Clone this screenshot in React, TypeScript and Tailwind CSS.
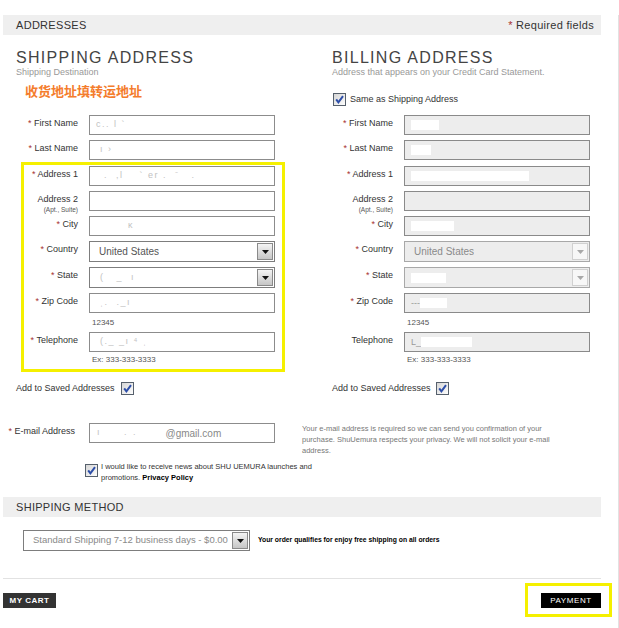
import React from "react";

const Check = () => (
  <svg width="13" height="13" viewBox="0 0 13 13" className="block shrink-0">
    <defs>
      <linearGradient id="cbg" x1="0" y1="0" x2="1" y2="1">
        <stop offset="0" stopColor="#d4d4d4" />
        <stop offset="1" stopColor="#ffffff" />
      </linearGradient>
    </defs>
    <rect x="0.5" y="0.5" width="12" height="12" fill="url(#cbg)" stroke="#56606c" />
    <path d="M3.2 6.4 L5.4 9.4 L10 3.2" fill="none" stroke="#2d4ea8" strokeWidth="2" />
  </svg>
);

type RowProps = {
  label: string;
  req?: boolean;
  labelW: string;
  h: string;
  mt?: string;
  sub?: string;
  children: React.ReactNode;
};

function Row({ label, req, labelW, h, mt = "", sub, children }: RowProps) {
  return (
    <div className={`flex items-start ${h} ${mt}`}>
      <div className={`${labelW} shrink-0 text-right text-[9px] leading-[12px] pt-[2px] text-[#333]`}>
        {req && <span className="text-[#a83232]">* </span>}
        {label}
        {sub && <div className="text-[6.5px] leading-[9px] text-[#555]">{sub}</div>}
      </div>
      <div className="ml-[11px]">{children}</div>
    </div>
  );
}

function Input({ gray, children }: { gray?: boolean; children?: React.ReactNode }) {
  return (
    <div
      className={`w-[186px] h-[20px] border flex items-center overflow-hidden ${
        gray ? "bg-[#ededed] border-[#8a8a8a]" : "bg-white border-[#8c8c8c]"
      }`}
    >
      {children}
    </div>
  );
}

const Faint = ({ t }: { t: string }) => (
  <span className="pl-[6px] text-[9px] text-[#c2c2c2] tracking-[1.5px] whitespace-pre">{t}</span>
);

const Redact = ({ w, pre }: { w: string; pre?: string }) => (
  <div className="flex items-center pl-[6px]">
    {pre && <span className="text-[9px] text-[#999] leading-[9px]">{pre}</span>}
    <div className={`${w} h-[10px] bg-white`} />
  </div>
);

function Select({
  gray,
  w,
  children,
}: {
  gray?: boolean;
  w: string;
  children: React.ReactNode;
}) {
  return (
    <div
      className={`${w} h-[21px] border flex items-center justify-between ${
        gray ? "bg-[#ededed] border-[#a8a8a8]" : "bg-white border-[#7d7d7d]"
      }`}
    >
      <div className="flex items-center min-w-0 overflow-hidden">{children}</div>
      <div
        className={`w-[16px] h-[17px] mr-[1px] border flex items-center justify-center shrink-0 ${
          gray
            ? "border-[#d0d0d0] bg-[#f7f7f7]"
            : "border-[#8a8a8a] bg-linear-to-b from-[#f4f4f4] to-[#c6c6c6]"
        }`}
      >
        <svg width="7" height="4" viewBox="0 0 7 4">
          <path d="M0 0H7L3.5 4Z" fill={gray ? "#a8a8a8" : "#111"} />
        </svg>
      </div>
    </div>
  );
}

function Hint({ h, pl, children }: { h: string; pl: string; children: React.ReactNode }) {
  return (
    <div className={`${h} ${pl} flex items-center text-[8px] text-[#555]`}>{children}</div>
  );
}

export default function App() {
  return (
    <div className="w-[619px] h-[628px] overflow-hidden bg-white pt-[15px] font-['Liberation_Sans',Arial,sans-serif] text-[#333]">
      <div className="w-[619px] min-h-[613px] border-r border-[#e2e2e2] pl-[3px]">
        <div className="w-[598px]">
          {/* Header bar */}
          <div className="h-[20px] bg-[#efefef] flex items-center justify-between pl-[13px] pr-[7px] text-[11px] tracking-[0.3px] text-[#333]">
            <span>ADDRESSES</span>
            <span>
              <span className="text-[#a83232]">*</span> Required fields
            </span>
          </div>

          <div className="flex">
            {/* Shipping column */}
            <div className="w-[312px] flex flex-col">
              <div className="pl-[13px] mt-[14px] text-[16px] leading-[18px] tracking-[1.3px] text-[#444]">
                SHIPPING ADDRESS
              </div>
              <div className="pl-[13px] text-[9px] leading-[11px] text-[#999]">Shipping Destination</div>
              <div className="pl-[22px] mt-[5px] text-[13px] leading-[16px] font-bold text-[#f47c2c] font-['Noto_Sans_CJK_SC',sans-serif]">
                收货地址填转运地址
              </div>

              <Row label="First Name" req labelW="w-[75px]" h="h-[20px]" mt="mt-[16px]">
                <Input>
                  <Faint t="c.. l `" />
                </Input>
              </Row>
              <Row label="Last Name" req labelW="w-[75px]" h="h-[20px]" mt="mt-[5px]">
                <Input>
                  <Faint t=" ı ›" />
                </Input>
              </Row>

              <div className="mt-[2px] ml-[18px] w-[264px] border-[3px] border-[#f5f000] pt-[1px] pb-[1px] flex flex-col">
                <Row label="Address 1" req labelW="w-[54px]" h="h-[20px]">
                  <Input>
                    <Faint t="  .  ,l    ` er .  ⁻   ." />
                  </Input>
                </Row>
                <Row label="Address 2" labelW="w-[54px]" h="h-[20px]" mt="mt-[5px]" sub="(Apt., Suite)">
                  <Input />
                </Row>
                <Row label="City" req labelW="w-[54px]" h="h-[20px]" mt="mt-[5px]">
                  <Input>
                    <Faint t="        ĸ" />
                  </Input>
                </Row>
                <Row label="Country" req labelW="w-[54px]" h="h-[21px]" mt="mt-[5px]">
                  <Select w="w-[186px]">
                    <span className="pl-[9px] text-[10px] text-[#555]">United States</span>
                  </Select>
                </Row>
                <Row label="State" req labelW="w-[54px]" h="h-[21px]" mt="mt-[5px]">
                  <Select w="w-[186px]">
                    <Faint t=" (   _  ı" />
                  </Select>
                </Row>
                <Row label="Zip Code" req labelW="w-[54px]" h="h-[20px]" mt="mt-[5px]">
                  <Input>
                    <Faint t=" ˌ.  ._ı" />
                  </Input>
                </Row>
                <Hint h="h-[19px]" pl="pl-[68px]">12345</Hint>
                <Row label="Telephone" req labelW="w-[54px]" h="h-[20px]">
                  <Input>
                    <Faint t=" (._ _ı ⁴ ˌ" />
                  </Input>
                </Row>
                <Hint h="h-[16px]" pl="pl-[68px]">Ex: 333-333-3333</Hint>
              </div>

              <div className="mt-[10px] pl-[13px] h-[13px] flex items-center gap-[6px] text-[9px] text-[#333]">
                <span>Add to Saved Addresses</span>
                <Check />
              </div>
            </div>

            {/* Billing column */}
            <div className="w-[286px] flex flex-col">
              <div className="pl-[17px] mt-[14px] text-[16px] leading-[18px] tracking-[1.3px] text-[#444]">
                BILLING ADDRESS
              </div>
              <div className="pl-[17px] text-[9px] leading-[11px] text-[#999]">
                Address that appears on your Credit Card Statement.
              </div>
              <div className="mt-[15px] pl-[18px] h-[13px] flex items-center gap-[4px] text-[9px] text-[#333]">
                <Check />
                <span>Same as Shipping Address</span>
              </div>

              <Row label="First Name" req labelW="w-[78px]" h="h-[20px]" mt="mt-[9px]">
                <Input gray>
                  <Redact w="w-[28px]" />
                </Input>
              </Row>
              <Row label="Last Name" req labelW="w-[78px]" h="h-[20px]" mt="mt-[5px]">
                <Input gray>
                  <Redact w="w-[20px]" />
                </Input>
              </Row>

              <div className="mt-[2px] ml-[21px] w-[264px] border-[3px] border-transparent pt-[1px] pb-[1px] flex flex-col">
                <Row label="Address 1" req labelW="w-[54px]" h="h-[20px]">
                  <Input gray>
                    <Redact w="w-[118px]" />
                  </Input>
                </Row>
                <Row label="Address 2" labelW="w-[54px]" h="h-[20px]" mt="mt-[5px]" sub="(Apt., Suite)">
                  <Input gray />
                </Row>
                <Row label="City" req labelW="w-[54px]" h="h-[20px]" mt="mt-[5px]">
                  <Input gray>
                    <Redact w="w-[43px]" />
                  </Input>
                </Row>
                <Row label="Country" req labelW="w-[54px]" h="h-[21px]" mt="mt-[5px]">
                  <Select gray w="w-[186px]">
                    <span className="pl-[9px] text-[10px] text-[#8a8a8a]">United States</span>
                  </Select>
                </Row>
                <Row label="State" req labelW="w-[54px]" h="h-[21px]" mt="mt-[5px]">
                  <Select gray w="w-[186px]">
                    <Redact w="w-[35px]" />
                  </Select>
                </Row>
                <Row label="Zip Code" req labelW="w-[54px]" h="h-[20px]" mt="mt-[5px]">
                  <Input gray>
                    <Redact w="w-[27px]" pre="---" />
                  </Input>
                </Row>
                <Hint h="h-[19px]" pl="pl-[68px]">12345</Hint>
                <Row label="Telephone" labelW="w-[54px]" h="h-[20px]">
                  <Input gray>
                    <Redact w="w-[51px]" pre="L_" />
                  </Input>
                </Row>
                <Hint h="h-[16px]" pl="pl-[68px]">Ex: 333-333-3333</Hint>
              </div>

              <div className="mt-[10px] pl-[17px] h-[13px] flex items-center gap-[5px] text-[9px] text-[#333]">
                <span>Add to Saved Addresses</span>
                <Check />
              </div>
            </div>
          </div>

          {/* Email */}
          <div className="mt-[28px] flex items-start">
            <div className="w-[72px] shrink-0 text-right text-[9px] leading-[12px] pt-[2px] text-[#333]">
              <span className="text-[#a83232]">* </span>E-mail Address
            </div>
            <div className="ml-[14px]">
              <Input>
                <span className="pl-[7px] text-[9px] text-[#c2c2c2] tracking-[2px] whitespace-pre">ı     . .</span>
                <span className="pl-[28px] text-[10px] text-[#888]">@gmail.com</span>
              </Input>
            </div>
            <div className="ml-[27px] text-[7.5px] leading-[11px] text-[#777] whitespace-nowrap">
              <div>Your e-mail address is required so we can send you confirmation of your</div>
              <div>purchase. ShuUemura respects your privacy. We will not solicit your e-mail</div>
              <div>address.</div>
            </div>
          </div>

          <div className="mt-[5px] ml-[82px] flex items-start">
            <div className="mt-[3px]">
              <Check />
            </div>
            <div className="ml-[3px] text-[7.5px] leading-[11px] text-[#333] whitespace-nowrap">
              <div>I would like to receive news about SHU UEMURA launches and</div>
              <div>
                promotions. <span className="font-bold text-black">Privacy Policy</span>
              </div>
            </div>
          </div>

          {/* Shipping method */}
          <div className="mt-[14px] h-[20px] bg-[#efefef] flex items-center pl-[13px] text-[11px] tracking-[0.3px] text-[#333]">
            SHIPPING METHOD
          </div>

          <div className="mt-[13px] ml-[20px] h-[21px] flex items-center">
            <Select w="w-[227px]">
              <span className="pl-[9px] text-[9.5px] text-[#8a8a8a] whitespace-nowrap">
                Standard Shipping 7-12 business days - $0.00
              </span>
            </Select>
            <span className="ml-[8px] text-[6.8px] font-bold text-black whitespace-nowrap">
              Your order qualifies for enjoy free shipping on all orders
            </span>
          </div>

          <div className="mt-[27px] h-px w-[598px] bg-[#e2e2e2]" />

          <div className="w-[609px] flex justify-between items-start">
            <div className="mt-[14px] w-[53px] h-[15px] bg-[#333] text-white text-[8px] font-bold tracking-[0.5px] flex items-center justify-center">
              MY CART
            </div>
            <div className="mt-[4px] w-[87px] h-[34px] border-[3px] border-[#f5f000] pt-[7px] pl-[13px]">
              <div className="w-[60px] h-[15px] bg-black text-white text-[8px] tracking-[0.6px] flex items-center justify-center">
                PAYMENT
              </div>
            </div>
          </div>
        </div>
      </div>
    </div>
  );
}
